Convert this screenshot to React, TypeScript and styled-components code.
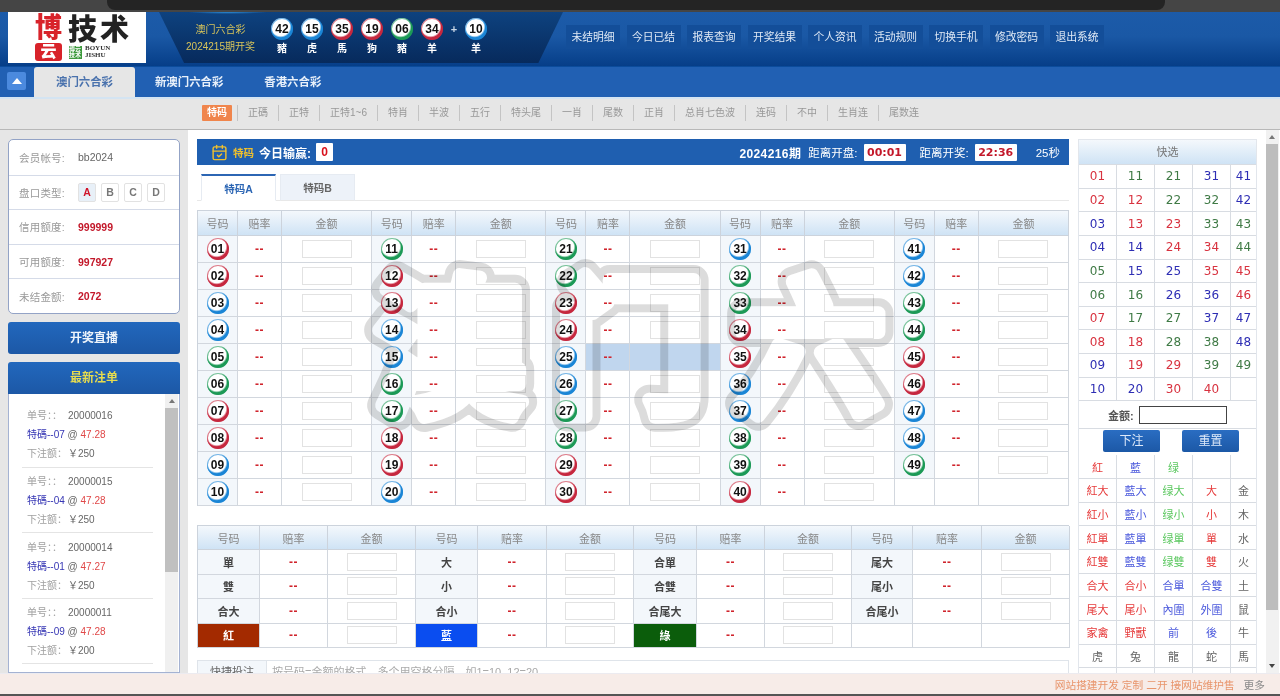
import React from 'react';
import styled, { createGlobalStyle } from 'styled-components';
import { CalendarCheck } from 'lucide-react';

const CJK = `"Liberation Sans", "Noto Sans CJK SC", sans-serif`;

const GlobalStyle = createGlobalStyle`
  html, body { margin: 0; height: 100%; overflow: hidden; background: #fff; }
  body { font-family: ${CJK}; font-size: 11px; color: #666; }
  * { box-sizing: border-box; }
`;

const Page = styled.div`
  height: 100vh;
  display: flex;
  flex-direction: column;
`;

const TopStrip = styled.div`
  height: 12px;
  flex: none;
  background: #454545;
  padding: 0 115px 0 107px;
`;

const TopPill = styled.div`
  height: 10px;
  background: #242424;
  border-radius: 0 0 8px 8px;
`;

const Header = styled.header`
  height: 54px;
  flex: none;
  display: flex;
  align-items: flex-start;
  background: linear-gradient(#1c5ba9, #1a58a5 45%, #063e88);
`;

const Logo = styled.div`
  width: 138px;
  height: 51px;
  margin-left: 8px;
  background: #fff;
  display: flex;
  padding-left: 25px;
  flex: none;
  overflow: hidden;
`;

const Seal = styled.div`
  width: 31px;
  display: flex;
  flex-direction: column;
  align-items: center;
  font-weight: 900;
  padding-top: 2px;
`;

const SealTop = styled.span`
  color: #d8232a;
  font-size: 27px;
  line-height: 29px;
`;

const SealBottom = styled.span`
  width: 27px;
  height: 18px;
  background: #d8232a;
  color: #fff;
  border-radius: 3px;
  font-size: 16px;
  line-height: 18px;
  text-align: center;
`;

const LogoRight = styled.div`
  display: flex;
  flex-direction: column;
  padding: 3px 0 0 4px;
`;

const LogoTitle = styled.div`
  color: #222;
  font-size: 29px;
  line-height: 30px;
  font-weight: 900;
  letter-spacing: 3px;
  white-space: nowrap;
`;

const LogoSub = styled.div`
  display: flex;
  gap: 3px;
  align-items: center;
  padding-left: 1px;
`;

const LogoGreen = styled.span`
  width: 13px;
  font-size: 6px;
  line-height: 6.5px;
  background: #3d9a3d;
  color: #fff;
  font-weight: 700;
`;

const LogoEn = styled.span`
  font-family: "Liberation Serif", serif;
  font-size: 7px;
  line-height: 7px;
  font-weight: 700;
  color: #333;
`;

const DrawPanel = styled.div`
  width: 404px;
  height: 51px;
  margin-left: 13px;
  flex: none;
  display: flex;
  align-items: flex-start;
  padding-left: 26px;
  background:
    radial-gradient(ellipse 40px 2px at 17% 0, #2f8fd8, transparent),
    linear-gradient(#0e427f, #072a5c);
  clip-path: polygon(0 0, 100% 0, 93.9% 100%, 6.2% 100%);
`;

const DrawInfo = styled.div`
  width: 71px;
  flex: none;
  margin-right: 11px;
  text-align: center;
  color: #d8c45a;
  font-size: 10px;
  line-height: 17px;
  padding-top: 9px;
  white-space: nowrap;
`;

const DrawBall = styled.div`
  width: 30px;
  flex: none;
  display: flex;
  flex-direction: column;
  align-items: center;
  padding-top: 6px;
  color: #fff;
  font-size: 10px;
  font-weight: 700;
`;

const DrawZodiac = styled.span`
  line-height: 14px;
  margin-top: 2px;
`;

const Plus = styled.div`
  width: 14px;
  flex: none;
  text-align: center;
  color: #c9d6e6;
  font-size: 11px;
  font-weight: 700;
  line-height: 34px;
`;

const ballColors = { r: '#c6283f', b: '#1b86d6', g: '#1d9a57' };
type BallColor = keyof typeof ballColors;

const Ball = styled.span<{ $c: BallColor }>`
  width: 22px;
  height: 22px;
  flex: none;
  border-radius: 50%;
  display: inline-flex;
  align-items: center;
  justify-content: center;
  color: #111;
  font-family: "Liberation Sans", sans-serif;
  font-size: 12px;
  font-weight: 700;
  background: radial-gradient(circle at 44% 40%, #fff 0 50%, ${p => ballColors[p.$c]} 60%, ${p => ballColors[p.$c]} 100%);
  box-shadow: inset 0 0 0 1px ${p => ballColors[p.$c]}99;
`;

const HeaderNav = styled.nav`
  display: flex;
  gap: 6.5px;
  margin: 13px 0 0 3px;
`;

const HeaderButton = styled.a`
  width: 54px;
  height: 24px;
  background: #134e99;
  color: #dfe9f5;
  font-size: 10.8px;
  line-height: 24px;
  text-align: center;
  white-space: nowrap;
`;

const LotteryNav = styled.div`
  height: 31px;
  flex: none;
  background: #2160b3;
  display: flex;
  align-items: flex-end;
  border-top: 1px solid #0b4c9c;
`;

const Toggle = styled.div`
  width: 19px;
  height: 18px;
  margin: 0 8px 7px 7px;
  background: #4b8ade;
  border-radius: 2px;
  display: flex;
  align-items: center;
  justify-content: center;
  &::before {
    content: '';
    border: 5px solid transparent;
    border-top: 0;
    border-bottom: 6px solid #fff;
  }
`;

const LotteryTab = styled.a<{ $active?: boolean }>`
  height: 30px;
  padding: 0 ${p => (p.$active ? 22 : 20)}px;
  margin-right: ${p => (p.$active ? 0 : 1)}px;
  line-height: 30px;
  font-size: 11.4px;
  font-weight: 700;
  color: ${p => (p.$active ? '#4a72ad' : '#e8f0fa')};
  background: ${p => (p.$active ? '#e6e6e6' : 'transparent')};
  border-radius: 3px 3px 0 0;
  white-space: nowrap;
`;

const SubNav = styled.div`
  height: 33px;
  flex: none;
  background: #e6e6e6;
  border-top: 2px solid #d4e4f2;
  border-bottom: 1px solid #b8b8b8;
  display: flex;
  align-items: center;
  padding-left: 202px;
`;

const SubChip = styled.span`
  width: 30px;
  height: 16px;
  background: #f0854c;
  color: #fff;
  font-size: 10px;
  font-weight: 700;
  line-height: 16px;
  text-align: center;
  border-radius: 1px;
  margin-right: 5px;
  position: relative;
  top: -1px;
`;

const SubItem = styled.a`
  padding: 0 10px;
  height: 16px;
  line-height: 16px;
  font-size: 10px;
  color: #989898;
  white-space: nowrap;
  border-left: 1px solid #c4c4c4;
  position: relative;
  top: -1px;
`;

const Body = styled.div`
  flex: 1;
  min-height: 0;
  display: flex;
  overflow: hidden;
`;

const LeftColumn = styled.aside`
  width: 188px;
  flex: none;
  background: #e6e6e6;
  padding: 9px 8px 0;
  display: flex;
  flex-direction: column;
  gap: 8px;
`;

const InfoCard = styled.div`
  background: #fff;
  border: 1px solid #93a3c6;
  border-radius: 5px;
`;

const InfoRow = styled.div`
  height: 34.6px;
  display: flex;
  align-items: center;
  padding-left: 10px;
  border-top: 1px solid #d5dbe8;
  &:first-child { border-top: 0; }
`;

const InfoLabel = styled.span`
  width: 59px;
  color: #999;
  font-size: 10.5px;
  letter-spacing: 0.2px;
`;

const InfoValue = styled.span<{ $red?: boolean }>`
  font-size: 10.5px;
  font-weight: ${p => (p.$red ? 700 : 400)};
  color: ${p => (p.$red ? '#c3182a' : '#666')};
`;

const PlateButtons = styled.div`
  display: flex;
  gap: 5px;
`;

const PlateButton = styled.span<{ $active?: boolean }>`
  width: 18px;
  height: 19px;
  border: 1px solid #e2e2e2;
  border-radius: 2px;
  background: ${p => (p.$active ? '#e8f0f8' : '#fff')};
  color: ${p => (p.$active ? '#d0142a' : '#777')};
  font-size: 10.5px;
  font-weight: 700;
  line-height: 17px;
  text-align: center;
`;

const SideBanner = styled.div<{ $gold?: boolean; $flat?: boolean }>`
  height: 32px;
  flex: none;
  background: linear-gradient(#2268bd, #1c58a6);
  border-radius: ${p => (p.$flat ? '3px 3px 0 0' : '3px')};
  color: ${p => (p.$gold ? '#e7dc4e' : '#eef4fb')};
  font-size: 12px;
  font-weight: 700;
  line-height: 32px;
  text-align: center;
`;

const BetBox = styled.div`
  flex: 1;
  min-height: 0;
  display: flex;
  flex-direction: column;
`;

const BetListFrame = styled.div`
  flex: 1;
  min-height: 0;
  display: flex;
  background: #fff;
  border: 1px solid #a4b2d2;
  border-top: 0;
  overflow: hidden;
`;

const BetList = styled.div`
  flex: 1;
  padding: 8px 12px 0 13px;
`;

const BetItem = styled.div`
  height: 65.6px;
  padding: 4.5px 0 0 5px;
  border-bottom: 1px solid #e4e4e4;
  font-size: 10px;
  line-height: 19px;
`;

const BetRow = styled.div`
  white-space: nowrap;
  height: 19px;
`;

const BetLabel = styled.span`
  display: inline-block;
  width: 41px;
  color: #a0a0a0;
`;

const BetCode = styled.span`
  color: #3636b4;
`;

const BetOdds = styled.span`
  color: #e04848;
`;

const ListScrollbar = styled.div`
  width: 13px;
  flex: none;
  background: #f0f0f0;
  margin-right: 1px;
  display: flex;
  flex-direction: column;
  align-items: center;
`;

const ArrowUp = styled.i`
  display: block;
  flex: none;
  margin: 5px 0;
  border: 3px solid transparent;
  border-top: 0;
  border-bottom: 4px solid #777;
`;

const ArrowDown = styled.i`
  display: block;
  flex: none;
  margin: 5px 0;
  border: 3px solid transparent;
  border-bottom: 0;
  border-top: 4px solid #444;
`;

const ListThumb = styled.div`
  width: 100%;
  height: 164px;
  background: #c0c0c0;
`;

const Center = styled.main`
  width: 882px;
  flex: none;
  padding: 9px 0 0 9px;
  position: relative;
`;

const TitleBar = styled.div`
  width: 872px;
  height: 26px;
  background: #1f5fb0;
  color: #fff;
  display: flex;
  align-items: center;
  padding-left: 14px;
  font-size: 12px;
  font-weight: 700;
`;

const TitleGold = styled.span`
  color: #efc02e;
  margin: 0 5px 0 5px;
  font-size: 10.5px;
`;

const WinBox = styled.span`
  width: 17px;
  height: 18px;
  background: #fff;
  color: #d8101c;
  font-size: 12px;
  line-height: 18px;
  text-align: center;
  margin-left: 5px;
  border-radius: 1px;
`;

const TitleRight = styled.div`
  margin-left: auto;
  display: flex;
  align-items: center;
  padding-right: 9px;
`;

const TitleText = styled.span<{ $gap: number }>`
  margin-left: ${p => p.$gap}px;
  font-size: 11.5px;
  font-weight: 400;
  white-space: nowrap;
`;

const Issue = styled.span`
  font-weight: 700;
  letter-spacing: 0.4px;
`;

const TimerBox = styled.span`
  width: 42px;
  height: 17px;
  background: #fff;
  color: #c3182a;
  font-family: "DejaVu Sans", sans-serif;
  font-size: 11px;
  font-weight: 700;
  line-height: 17px;
  text-align: center;
  margin-left: 6px;
  border-radius: 1px;
`;

const TabStrip = styled.div`
  width: 872px;
  height: 27px;
  margin: 9px 0 9px;
  padding-left: 4px;
  display: flex;
  gap: 4px;
  align-items: flex-end;
  border-bottom: 1px solid #e8e8e8;
`;

const BetTab = styled.a<{ $active?: boolean }>`
  width: 75px;
  height: 27px;
  margin-bottom: -1px;
  line-height: 26px;
  text-align: center;
  font-size: 10.5px;
  font-weight: 700;
  color: ${p => (p.$active ? '#2c66b4' : '#666')};
  background: ${p => (p.$active ? '#fff' : '#edf2f9')};
  border: 1px solid #e6ebf2;
  border-top: ${p => (p.$active ? '2px solid #2c66b4' : '1px solid #e6ebf2')};
  border-bottom: ${p => (p.$active ? '1px solid #fff' : '1px solid #e8e8e8')};
`;

const NumberGrid = styled.div`
  width: 872px;
  display: grid;
  grid-template-columns: repeat(5, 40px 44px 1fr);
  grid-template-rows: 25px;
  grid-auto-rows: 27px;
  border-top: 1px solid #ccd3dc;
  border-left: 1px solid #ccd3dc;
`;

const BigGrid = styled.div`
  width: 872px;
  margin-top: 19px;
  display: grid;
  grid-template-columns: 62px 68px 88px 62px 69px 87px 63px 68px 87px 61px 69px 88px;
  grid-template-rows: 24px;
  grid-auto-rows: 24.5px;
  border-top: 1px solid #ccd3dc;
  border-left: 1px solid #ccd3dc;
`;

const HeadCell = styled.div`
  display: flex;
  align-items: center;
  justify-content: center;
  border-right: 1px solid #ccd3dc;
  border-bottom: 1px solid #ccd3dc;
  background: linear-gradient(#f4f8fc, #cfe3f5);
  color: #888;
  font-size: 11px;
`;

const Cell = styled.div<{ $hl?: boolean }>`
  display: flex;
  align-items: center;
  justify-content: center;
  border-right: 1px solid #d2d7de;
  border-bottom: 1px solid #d2d7de;
  background: ${p => (p.$hl ? '#c0d6ee' : 'transparent')};
  min-width: 0;
`;

const NumberCell = styled(Cell)`
  background: #f3f7fb;
`;

const bigColors = { r: '#a32a00', b: '#0a4df0', g: '#0b5d0b' };

const NameCell = styled(Cell)<{ $fill?: keyof typeof bigColors }>`
  background: ${p => (p.$fill ? bigColors[p.$fill] : '#f3f7fb')};
  color: ${p => (p.$fill ? '#fff' : '#444')};
  font-size: 11px;
  font-weight: 700;
`;

const Odds = styled.span`
  color: #d0242c;
  font-size: 12px;
  line-height: 12px;
  letter-spacing: 0.5px;
  font-weight: 700;
  font-family: "Liberation Sans", sans-serif;
`;

const Amount = styled.input`
  width: 50px;
  height: 18px;
  padding: 0;
  border: 1px solid #e2e2e2;
  background: transparent;
  outline: none;
`;

const QuickBetRow = styled.div`
  width: 872px;
  height: 40px;
  margin-top: 12px;
  display: flex;
  border: 1px solid #dfe4ea;
`;

const QuickBetLabel = styled.div`
  width: 69px;
  background: #f3f7fb;
  border-right: 1px solid #dfe4ea;
  color: #666;
  font-size: 11px;
  line-height: 22px;
  text-align: center;
`;

const QuickBetHint = styled.div`
  padding-left: 5px;
  color: #aaa;
  font-size: 11px;
  line-height: 22px;
`;

const Watermark = styled.svg`
  position: absolute;
  left: 170px;
  top: 118px;
  width: 560px;
  height: 190px;
  mix-blend-mode: multiply;
  pointer-events: none;
`;

const WatermarkText = styled.text`
  font-family: "Noto Sans CJK SC", sans-serif;
  font-size: 150px;
  font-weight: 700;
  letter-spacing: 30px;
  stroke-linejoin: round;
`;

const RightPanel = styled.aside`
  width: 179px;
  flex: none;
  margin: 9px 0 0 8px;
  border: 1px solid #e2e6ec;
  border-bottom: 0;
  align-self: flex-start;
`;

const QuickHead = styled.div`
  height: 24px;
  background: linear-gradient(#f4f8fc, #cfe3f5);
  color: #777;
  font-size: 11px;
  line-height: 24px;
  text-align: center;
`;

const QuickGrid = styled.div`
  display: grid;
  grid-template-columns: 38px 38px 38px 38px 1fr;
  grid-auto-rows: 23.65px;
`;

const quickColors = { r: '#d8323f', g: '#3f7a45', b: '#2e2eb4' };

const QuickCell = styled.div<{ $c: BallColor }>`
  display: flex;
  align-items: center;
  justify-content: center;
  border-top: 1px solid #d8dce2;
  border-right: 1px solid #d8dce2;
  color: ${p => quickColors[p.$c]};
  font-family: "DejaVu Sans", sans-serif;
  font-size: 12px;
  &:nth-child(5n) { border-right: 0; }
`;

const AmountRow = styled.div`
  height: 28px;
  border-top: 1px solid #d8dce2;
  display: flex;
  align-items: center;
  padding-left: 29px;
  color: #555;
  font-size: 11px;
  font-weight: 700;
  gap: 5px;
`;

const AmountInput = styled.input`
  width: 88px;
  height: 18px;
  padding: 0;
  border: 1.5px solid #444;
  background: #fff;
  outline: none;
`;

const ButtonRow = styled.div`
  height: 27px;
  border-top: 1px solid #d8dce2;
  display: flex;
  gap: 22px;
  padding: 1px 0 0 24px;
`;

const PanelButton = styled.a`
  width: 57px;
  height: 22px;
  background: linear-gradient(#2a6dc2, #1c58a6);
  border-radius: 2px;
  color: #dfeafa;
  font-size: 12px;
  line-height: 22px;
  text-align: center;
`;

const attrColors = { r: '#e63a3a', b: '#4a58dc', g: '#5cc860', k: '#666' };
type AttrColor = keyof typeof attrColors;

const AttrCell = styled.div<{ $c: AttrColor }>`
  display: flex;
  align-items: center;
  justify-content: center;
  border-bottom: 1px solid #d8dce2;
  border-right: 1px solid #d8dce2;
  color: ${p => attrColors[p.$c]};
  font-size: 11px;
  &:nth-child(5n) { border-right: 0; }
`;

const PageScrollbar = styled.div`
  width: 13px;
  flex: none;
  margin-left: 9px;
  padding-right: 1px;
  background: #f1f1f1;
  display: flex;
  flex-direction: column;
  align-items: center;
`;

const PageThumb = styled.div`
  width: 12px;
  height: 466px;
  flex: none;
  background: #bdbdbd;
`;

const Spacer = styled.div`
  flex: 1;
`;

const Footer = styled.footer`
  height: 23px;
  flex: none;
  background: #f7ece8;
  border-top: 1px solid #ecebf0;
  border-bottom: 2px solid #555;
  display: flex;
  justify-content: flex-end;
  align-items: center;
  padding-right: 15px;
  font-size: 10.7px;
`;

const FooterAd = styled.span`
  color: #e8956c;
  margin-right: 3px;
`;

const FooterMore = styled.span`
  color: #8a8a8a;
`;

const redSet = [1, 2, 7, 8, 12, 13, 18, 19, 23, 24, 29, 30, 34, 35, 40, 45, 46];
const blueSet = [3, 4, 9, 10, 14, 15, 20, 25, 26, 31, 36, 37, 41, 42, 47, 48];

function colorOf(n: number): BallColor {
  if (redSet.includes(n)) return 'r';
  if (blueSet.includes(n)) return 'b';
  return 'g';
}

const pad = (n: number) => String(n).padStart(2, '0');

const headerButtons = ['未结明细', '今日已结', '报表查询', '开奖结果', '个人资讯', '活动规则', '切换手机', '修改密码', '退出系统'];
const subItems = ['正碼', '正特', '正特1~6', '特肖', '半波', '五行', '特头尾', '一肖', '尾数', '正肖', '总肖七色波', '连码', '不中', '生肖连', '尾数连'];
const drawBalls: [number, string][] = [[42, '豬'], [15, '虎'], [35, '馬'], [19, '狗'], [6, '豬'], [34, '羊']];

const bets = [
  { no: '20000016', code: '07', odds: '47.28', amount: '250' },
  { no: '20000015', code: '04', odds: '47.28', amount: '250' },
  { no: '20000014', code: '01', odds: '47.27', amount: '250' },
  { no: '20000011', code: '09', odds: '47.28', amount: '200' },
];

const bigRows: [string, string, string, string][] = [
  ['單', '大', '合單', '尾大'],
  ['雙', '小', '合雙', '尾小'],
  ['合大', '合小', '合尾大', '合尾小'],
];

const attrRows: [string, AttrColor][][] = [
  [['紅', 'r'], ['藍', 'b'], ['绿', 'g'], ['', 'k'], ['', 'k']],
  [['紅大', 'r'], ['藍大', 'b'], ['绿大', 'g'], ['大', 'r'], ['金', 'k']],
  [['紅小', 'r'], ['藍小', 'b'], ['绿小', 'g'], ['小', 'r'], ['木', 'k']],
  [['紅單', 'r'], ['藍單', 'b'], ['绿單', 'g'], ['單', 'r'], ['水', 'k']],
  [['紅雙', 'r'], ['藍雙', 'b'], ['绿雙', 'g'], ['雙', 'r'], ['火', 'k']],
  [['合大', 'r'], ['合小', 'r'], ['合單', 'b'], ['合雙', 'b'], ['土', 'k']],
  [['尾大', 'r'], ['尾小', 'r'], ['內圍', 'b'], ['外圍', 'b'], ['鼠', 'k']],
  [['家禽', 'r'], ['野獸', 'r'], ['前', 'b'], ['後', 'b'], ['牛', 'k']],
  [['虎', 'k'], ['兔', 'k'], ['龍', 'k'], ['蛇', 'k'], ['馬', 'k']],
  [['', 'k'], ['', 'k'], ['', 'k'], ['', 'k'], ['', 'k']],
];

function NumberRows() {
  const cells: React.ReactNode[] = [];
  for (let row = 1; row <= 10; row++) {
    for (let col = 0; col < 5; col++) {
      const n = col * 10 + row;
      if (n > 49) {
        cells.push(<Cell key={n} />, <Cell key={`${n}o`} />, <Cell key={`${n}a`} />);
        continue;
      }
      const hover = n === 25;
      cells.push(
        <NumberCell key={n}><Ball $c={colorOf(n)}>{pad(n)}</Ball></NumberCell>,
        <Cell key={`${n}o`} $hl={hover}><Odds>--</Odds></Cell>,
        <Cell key={`${n}a`} $hl={hover}>{!hover && <Amount />}</Cell>,
      );
    }
  }
  return <>{cells}</>;
}

export default function App() {
  return (
    <Page>
      <GlobalStyle />
      <TopStrip><TopPill /></TopStrip>

      <Header>
        <Logo>
          <Seal>
            <SealTop>博</SealTop>
            <SealBottom>云</SealBottom>
          </Seal>
          <LogoRight>
            <LogoTitle>技术</LogoTitle>
            <LogoSub>
              <LogoGreen>博云技术</LogoGreen>
              <LogoEn>BOYUN<br />JISHU</LogoEn>
            </LogoSub>
          </LogoRight>
        </Logo>

        <DrawPanel>
          <DrawInfo>澳门六合彩<br />2024215期开奖</DrawInfo>
          {drawBalls.map(([n, z]) => (
            <DrawBall key={n}>
              <Ball $c={colorOf(n)}>{pad(n)}</Ball>
              <DrawZodiac>{z}</DrawZodiac>
            </DrawBall>
          ))}
          <Plus>+</Plus>
          <DrawBall>
            <Ball $c="b">10</Ball>
            <DrawZodiac>羊</DrawZodiac>
          </DrawBall>
        </DrawPanel>

        <HeaderNav>
          {headerButtons.map(b => <HeaderButton key={b}>{b}</HeaderButton>)}
        </HeaderNav>
      </Header>

      <LotteryNav>
        <Toggle />
        <LotteryTab $active>澳门六合彩</LotteryTab>
        <LotteryTab>新澳门六合彩</LotteryTab>
        <LotteryTab>香港六合彩</LotteryTab>
      </LotteryNav>

      <SubNav>
        <SubChip>特码</SubChip>
        {subItems.map(s => <SubItem key={s}>{s}</SubItem>)}
      </SubNav>

      <Body>
        <LeftColumn>
          <InfoCard>
            <InfoRow><InfoLabel>会员帐号:</InfoLabel><InfoValue>bb2024</InfoValue></InfoRow>
            <InfoRow>
              <InfoLabel>盘口类型:</InfoLabel>
              <PlateButtons>
                <PlateButton $active>A</PlateButton>
                <PlateButton>B</PlateButton>
                <PlateButton>C</PlateButton>
                <PlateButton>D</PlateButton>
              </PlateButtons>
            </InfoRow>
            <InfoRow><InfoLabel>信用额度:</InfoLabel><InfoValue $red>999999</InfoValue></InfoRow>
            <InfoRow><InfoLabel>可用额度:</InfoLabel><InfoValue $red>997927</InfoValue></InfoRow>
            <InfoRow><InfoLabel>未结金额:</InfoLabel><InfoValue $red>2072</InfoValue></InfoRow>
          </InfoCard>

          <SideBanner>开奖直播</SideBanner>

          <BetBox>
            <SideBanner $gold $flat>最新注单</SideBanner>
            <BetListFrame>
              <BetList>
                {bets.map(b => (
                  <BetItem key={b.no}>
                    <BetRow><BetLabel>单号：：</BetLabel>{b.no}</BetRow>
                    <BetRow><BetCode>特碼--{b.code}</BetCode> @ <BetOdds>{b.odds}</BetOdds></BetRow>
                    <BetRow><BetLabel>下注额：</BetLabel>￥{b.amount}</BetRow>
                  </BetItem>
                ))}
              </BetList>
              <ListScrollbar>
                <ArrowUp />
                <ListThumb />
              </ListScrollbar>
            </BetListFrame>
          </BetBox>
        </LeftColumn>

        <Center>
          <TitleBar>
            <CalendarCheck size={17} color="#efc02e" strokeWidth={2} />
            <TitleGold>特码</TitleGold>
            今日输赢:
            <WinBox>0</WinBox>
            <TitleRight>
              <Issue>2024216期</Issue>
              <TitleText $gap={7}>距离开盘:</TitleText>
              <TimerBox>00:01</TimerBox>
              <TitleText $gap={14}>距离开奖:</TitleText>
              <TimerBox>22:36</TimerBox>
              <TitleText $gap={19}>25秒</TitleText>
            </TitleRight>
          </TitleBar>

          <TabStrip>
            <BetTab $active>特码A</BetTab>
            <BetTab>特码B</BetTab>
          </TabStrip>

          <NumberGrid>
            {Array.from({ length: 5 }).flatMap((_, i) => [
              <HeadCell key={`n${i}`}>号码</HeadCell>,
              <HeadCell key={`o${i}`}>赔率</HeadCell>,
              <HeadCell key={`a${i}`}>金额</HeadCell>,
            ])}
            <NumberRows />
          </NumberGrid>

          <BigGrid>
            {Array.from({ length: 4 }).flatMap((_, i) => [
              <HeadCell key={`n${i}`}>号码</HeadCell>,
              <HeadCell key={`o${i}`}>赔率</HeadCell>,
              <HeadCell key={`a${i}`}>金额</HeadCell>,
            ])}
            {bigRows.flatMap(row => row.map(name => (
              <React.Fragment key={name}>
                <NameCell>{name}</NameCell>
                <Cell><Odds>--</Odds></Cell>
                <Cell><Amount /></Cell>
              </React.Fragment>
            )))}
            <NameCell $fill="r">紅</NameCell>
            <Cell><Odds>--</Odds></Cell>
            <Cell><Amount /></Cell>
            <NameCell $fill="b">藍</NameCell>
            <Cell><Odds>--</Odds></Cell>
            <Cell><Amount /></Cell>
            <NameCell $fill="g">綠</NameCell>
            <Cell><Odds>--</Odds></Cell>
            <Cell><Amount /></Cell>
            <Cell /><Cell /><Cell />
          </BigGrid>

          <QuickBetRow>
            <QuickBetLabel>快捷投注</QuickBetLabel>
            <QuickBetHint>按号码=金额的格式，多个用空格分隔，如1=10, 12=20</QuickBetHint>
          </QuickBetRow>

          <Watermark viewBox="0 0 560 190">
            <defs>
              <WatermarkText id="watermark-text" x="17" y="155">澳门六</WatermarkText>
            </defs>
            <use href="#watermark-text" fill="#dcdcdc" stroke="#dcdcdc" strokeWidth={30} />
            <use href="#watermark-text" fill="#fff" stroke="#fff" strokeWidth={14} />
          </Watermark>
        </Center>

        <RightPanel>
          <QuickHead>快选</QuickHead>
          <QuickGrid>
            {Array.from({ length: 50 }).map((_, i) => {
              const n = (i % 5) * 10 + Math.floor(i / 5) + 1;
              if (n > 49) return <QuickCell key={n} $c="r" />;
              return <QuickCell key={n} $c={colorOf(n)}>{pad(n)}</QuickCell>;
            })}
          </QuickGrid>
          <AmountRow>金额: <AmountInput /></AmountRow>
          <ButtonRow>
            <PanelButton>下注</PanelButton>
            <PanelButton>重置</PanelButton>
          </ButtonRow>
          <QuickGrid>
            {attrRows.flat().map(([t, c], i) => <AttrCell key={i} $c={c}>{t}</AttrCell>)}
          </QuickGrid>
        </RightPanel>

        <PageScrollbar>
          <ArrowUp />
          <PageThumb />
          <Spacer />
          <ArrowDown />
        </PageScrollbar>
      </Body>

      <Footer>
        <FooterAd>网站搭建开发 定制 二开 接网站维护售</FooterAd>
        <FooterMore>&nbsp;&nbsp;更多</FooterMore>
      </Footer>
    </Page>
  );
}
